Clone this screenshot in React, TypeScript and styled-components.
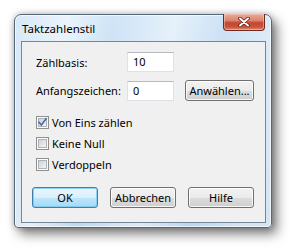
import React from 'react';
import styled, { createGlobalStyle } from 'styled-components';

const Global = createGlobalStyle`
  html, body { margin: 0; padding: 0; background: #ffffff; }
  body {
    font-family: "Noto Sans", "Open Sans", sans-serif;
    font-size: 11px;
    color: #000;
  }
  * { box-sizing: border-box; }
`;

const Stage = styled.div`
  width: 303px;
  height: 252px;
  padding: 14px 0 0 14px;
`;

const Window = styled.div`
  width: 258px;
  height: 214px;
  border: 1px solid #56677a;
  border-radius: 7px 7px 4px 4px;
  background:
    linear-gradient(100deg, rgba(255,255,255,0.2) 0%, rgba(255,255,255,0.6) 18%, rgba(255,255,255,0.05) 34%, rgba(255,255,255,0.5) 55%, rgba(255,255,255,0) 72%, rgba(255,255,255,0.35) 90%),
    linear-gradient(180deg, #cde3f6 0%, #bcd6ee 100%);
  box-shadow: 5px 6px 12px rgba(0, 0, 0, 0.5), 0 0 6px rgba(0, 0, 0, 0.25), inset 0 0 0 1px rgba(255, 255, 255, 0.65);
  display: flex;
  flex-direction: column;
`;

const TitleBar = styled.div`
  height: 26px;
  display: flex;
  align-items: flex-start;
  justify-content: space-between;
  padding: 0 6px 0 7px;
`;

const Title = styled.span`
  font-size: 11.5px;
  line-height: 27px;
  color: #000;
`;

const CloseButton = styled.div`
  width: 42px;
  height: 17px;
  margin-top: -1px;
  border: 1px solid #6e2a20;
  border-top: none;
  border-radius: 0 0 4px 4px;
  background: linear-gradient(180deg, #e9a896 0%, #dc8670 40%, #c4462f 55%, #c9523a 80%, #e08a6c 100%);
  box-shadow: inset 0 0 0 1px rgba(255, 220, 210, 0.45);
  display: flex;
  align-items: center;
  justify-content: center;
`;

const Client = styled.div`
  margin: 0 5px 4px 6px;
  flex: 1;
  border: 1px solid #74869a;
  background: #f0f0f0;
  padding: 10px 9px 0 10px;
  display: flex;
  flex-direction: column;
  align-items: flex-start;
`;

const FieldRow = styled.div<{ $h: number; $mt: number }>`
  display: flex;
  align-items: center;
  gap: 11px;
  height: ${p => p.$h}px;
  margin-top: ${p => p.$mt}px;
  padding-left: 4px;
`;

const Label = styled.span`
  width: 80px;
  flex: 0 0 80px;
  white-space: nowrap;
`;

const TextBox = styled.div`
  width: 47px;
  flex: 0 0 47px;
  height: 20px;
  border: 1px solid #dde2e8;
  border-top-color: #b5b9c0;
  background: #fff;
  padding-left: 5px;
  line-height: 18px;
`;

const PushButton = styled.button<{ $default?: boolean; $w: number }>`
  width: ${p => p.$w}px;
  flex: 0 0 ${p => p.$w}px;
  height: 21px;
  padding: 0;
  font-family: inherit;
  font-size: 11px;
  color: #000;
  border-radius: 3px;
  border: 1px solid ${p => (p.$default ? '#3c7fb1' : '#707070')};
  background: ${p =>
    p.$default
      ? 'linear-gradient(180deg, #eaf6fd 0%, #d9f0fc 50%, #bee6fd 51%, #a7d9f5 100%)'
      : 'linear-gradient(180deg, #f2f2f2 0%, #ebebeb 50%, #dddddd 51%, #cfcfcf 100%)'};
  box-shadow: inset 0 0 0 1px ${p => (p.$default ? 'rgba(120,200,240,0.8)' : 'rgba(255,255,255,0.8)')};
  display: flex;
  align-items: center;
  justify-content: center;
`;

const Checks = styled.div`
  margin-top: 15px;
  padding-left: 4px;
  display: flex;
  flex-direction: column;
  gap: 8px;
`;

const CheckRow = styled.label`
  height: 13px;
  display: flex;
  align-items: center;
  gap: 3px;
`;

const Buttons = styled.div`
  margin-top: 16px;
  display: flex;
  gap: 12px;
`;

const CheckBox: React.FC<{ checked?: boolean }> = ({ checked }) => (
  <svg width="13" height="13" viewBox="0 0 13 13">
    <defs>
      <linearGradient id="cbg" x1="0" y1="0" x2="1" y2="1">
        <stop offset="0" stopColor="#cbcfd5" />
        <stop offset="1" stopColor="#f7f7f7" />
      </linearGradient>
    </defs>
    <rect x="0.5" y="0.5" width="12" height="12" fill="#fdfdfd" stroke="#8e8f8f" />
    <rect x="2.5" y="2.5" width="8" height="8" fill="url(#cbg)" stroke="#aeb3b9" />
    {checked && (
      <path d="M3 6.3 L5.4 9 L10.2 2.6" fill="none" stroke="#4f68a8" strokeWidth="1.6" strokeLinecap="square" />
    )}
  </svg>
);

const CloseGlyph = () => (
  <svg width="12" height="10" viewBox="0 0 12 10">
    <path d="M2 1.5 L10 8.5 M10 1.5 L2 8.5" stroke="#5a1a12" strokeWidth="3.6" strokeLinecap="round" />
    <path d="M2 1.5 L10 8.5 M10 1.5 L2 8.5" stroke="#ffffff" strokeWidth="2" strokeLinecap="round" />
  </svg>
);

export default function App() {
  return (
    <>
      <Global />
      <Stage>
        <Window>
          <TitleBar>
            <Title>Taktzahlenstil</Title>
            <CloseButton>
              <CloseGlyph />
            </CloseButton>
          </TitleBar>
          <Client>
            <FieldRow $h={20} $mt={0}>
              <Label>Zählbasis:</Label>
              <TextBox>10</TextBox>
            </FieldRow>
            <FieldRow $h={21} $mt={8}>
              <Label>Anfangszeichen:</Label>
              <TextBox>0</TextBox>
              <PushButton $w={69}>Anwählen...</PushButton>
            </FieldRow>
            <Checks>
              <CheckRow>
                <CheckBox checked />
                Von Eins zählen
              </CheckRow>
              <CheckRow>
                <CheckBox />
                Keine Null
              </CheckRow>
              <CheckRow>
                <CheckBox />
                Verdoppeln
              </CheckRow>
            </Checks>
            <Buttons>
              <PushButton $default $w={66}>OK</PushButton>
              <PushButton $w={66}>Abbrechen</PushButton>
              <PushButton $w={66}>Hilfe</PushButton>
            </Buttons>
          </Client>
        </Window>
      </Stage>
    </>
  );
}
